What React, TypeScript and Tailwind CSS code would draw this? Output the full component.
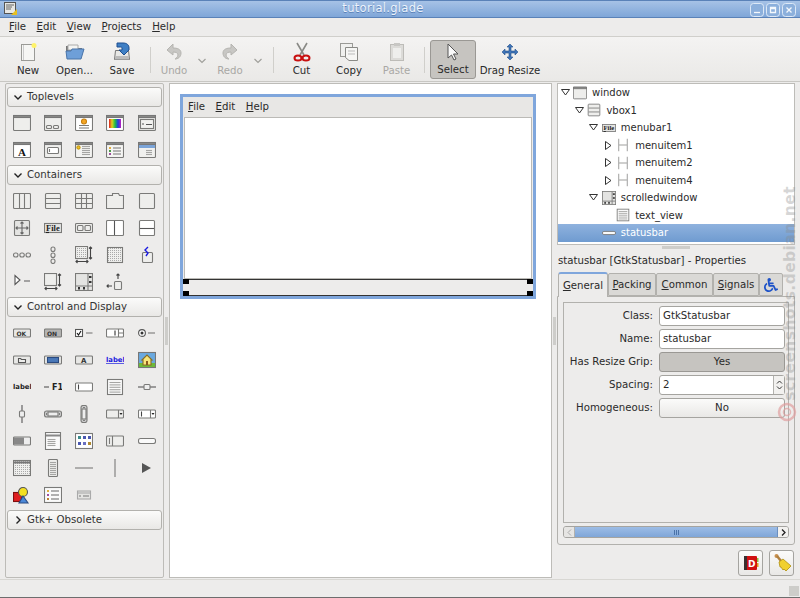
import type { ReactNode } from 'react';
import { FaWheelchair } from 'react-icons/fa';

// Small glyph canvas shared by palette and tree icons
function Ico({ children, size = 18 }: { children: ReactNode; size?: number }) {
  return (
    <svg width={size} height={size} viewBox="0 0 18 18" fill="none" stroke="#7a7a78" strokeWidth="1.1">
      {children}
    </svg>
  );
}

const Win = ({ children, fill = '#eeeeec' }: { children?: ReactNode; fill?: string }) => (
  <>
    <rect x="0.5" y="1.5" width="17" height="15" rx="1" fill={fill} />
    <rect x="0.5" y="1.5" width="17" height="2" fill="#8a8a88" stroke="#777" />
    {children}
  </>
);
const Lines = ({ x, y, w, n, gap = 2 }: { x: number; y: number; w: number; n: number; gap?: number }) => (
  <>
    {Array.from({ length: n }).map((_, i) => (
      <path key={i} d={`M${x} ${y + i * gap + 0.5}h${w}`} stroke="#a5a5a3" />
    ))}
  </>
);

const icons: Record<string, ReactNode> = {
  window: <Win />,
  dialog: <Win><rect x="2.5" y="11.5" width="5" height="3" rx="1" /><rect x="9.5" y="11.5" width="5" height="3" rx="1" /></Win>,
  about: <Win fill="#fff"><circle cx="9" cy="7.5" r="2.5" fill="#f5a623" stroke="#c67f10" /><path d="M4 11.5h10M4 14h10" /></Win>,
  color: <Win fill="#fff"><rect x="3" y="5" width="12" height="9" fill="url(#rainbow)" stroke="none" /></Win>,
  filedlg: <Win fill="#e4e4e2"><rect x="2.5" y="5.5" width="13" height="9" fill="#f2f2f0" /><path d="M4 10h2M8 10.5h6" stroke="#555" /></Win>,
  font: <Win fill="#fff"><text x="5" y="14.5" fontFamily="Liberation Serif, serif" fontSize="11" fontWeight="700" fill="#111" stroke="none">A</text></Win>,
  input: <Win><rect x="3.5" y="6.5" width="11" height="6" rx="1" fill="#fff" /><path d="M5.5 8v3" /></Win>,
  message: <Win fill="#f3f3f1"><circle cx="3.5" cy="6.5" r="1.6" fill="#f5c623" stroke="#c69a10" /><Lines x={7} y={5} w={8} n={5} /></Win>,
  recent: <Win fill="#f5f5f3"><rect x="3" y="6" width="2" height="2" fill="#e0b040" stroke="none" /><rect x="3" y="9" width="2" height="2" fill="#4a9a4a" stroke="none" /><rect x="3" y="12" width="2" height="2" fill="#a050a0" stroke="none" /><path d="M7 7h8M7 10h8M7 13h8" stroke="#777" /></Win>,
  assistant: <Win fill="#f0f0ee"><rect x="1" y="4" width="16" height="3" fill="#7ba4d8" stroke="none" /><Lines x={8} y={9} w={6} n={3} /></Win>,
  hbox: <><rect x="0.5" y="1.5" width="17" height="15" rx="1" fill="#eeeeec" /><path d="M6.5 2v14M11.5 2v14" /></>,
  vbox: <><rect x="1.5" y="1.5" width="15" height="15" rx="1" fill="#eeeeec" /><path d="M2 6.5h14M2 11.5h14" /></>,
  table: <><rect x="0.5" y="1.5" width="17" height="15" rx="1" fill="#eeeeec" /><path d="M6.5 2v14M11.5 2v14M1 6.5h16M1 11.5h16" /></>,
  notebook: <><path d="M0.5 16.5v-13h6v-2h6l1 2h4v13z" fill="#eeeeec" /></>,
  frame: <rect x="1.5" y="1.5" width="15" height="15" rx="1" fill="#eeeeec" />,
  fixed: <><rect x="1.5" y="1.5" width="15" height="15" rx="1" fill="#e4e4e2" /><path d="M9 3v12M3 9h12M7.5 4.5 9 3l1.500 1.500M7.500 13.500 9 15l1.500-1.500M4.500 7.500 3 9l1.500 1.500M13.500 7.500 15 9l-1.500 1.500" stroke="#666" /></>,
  menubar: <><rect x="0.5" y="4.5" width="17" height="9" fill="#e4e4e2" /><text x="2" y="12" fontFamily="Liberation Serif, serif" fontSize="8.5" fontWeight="700" fill="#222" stroke="none">File</text><path d="M2 13.5h3" stroke="#222" /></>,
  btnbox: <><rect x="0.5" y="4.5" width="17" height="9" rx="1" fill="#eeeeec" /><rect x="2.5" y="6.5" width="5.5" height="5" rx="1" /><rect x="10" y="6.5" width="5.5" height="5" rx="1" /></>,
  hpaned: <><rect x="0.5" y="1.5" width="17" height="15" rx="1" fill="#fff" /><path d="M8.500 2v14" stroke="#555" /></>,
  vpaned: <><rect x="1.5" y="1.5" width="15" height="15" rx="1" fill="#fff" /><path d="M2 9.500h14" stroke="#555" /></>,
  hsep3: <><rect x="0.5" y="7" width="4.500" height="4" rx="2" /><rect x="6.800" y="7" width="4.500" height="4" rx="2" /><rect x="13" y="7" width="4.500" height="4" rx="2" /></>,
  vsep3: <><rect x="7" y="1" width="4" height="4.500" rx="2" /><rect x="7" y="7" width="4" height="4.500" rx="2" /><rect x="7" y="13" width="4" height="4.500" rx="2" /></>,
  layout: <><rect x="0.5" y="0.5" width="12" height="12" fill="url(#dots)" /><path d="M15.500 1v12M14 2.500 15.500 1 17 2.500M14 11.500l1.500 1.500 1.500-1.500M1 15.500h12M2.500 14 1 15.500 2.500 17M11.500 14l1.500 1.500-1.500 1.500" stroke="#444" /></>,
  dotgrid: <rect x="1.5" y="1.5" width="15" height="15" fill="url(#dots)" />,
  hand: <><rect x="4.500" y="6.500" width="10" height="10" rx="1" fill="#eeeeec" /><path d="M10 1 7 4l3 3-2 3" stroke="#1a1ae0" strokeWidth="1.400" /></>,
  expander: <><path d="M2 2.500v9l5-4.500z" fill="#fff" stroke="#555" /><path d="M11 8h6" stroke="#666" /></>,
  viewport: <><rect x="0.5" y="0.5" width="12" height="12" fill="#eeeeec" /><path d="M15.500 1v12M14 2.500 15.500 1 17 2.500M14 11.500l1.500 1.500 1.500-1.500M1 15.500h12M2.500 14 1 15.500 2.500 17M11.500 14l1.500 1.500-1.500 1.500" stroke="#444" /></>,
  scrolled: <><rect x="0.5" y="0.5" width="17" height="17" fill="#e4e4e2" /><path d="M13 1v16M1 13h16" /><rect x="14" y="3" width="2.500" height="2" fill="#333" stroke="none" /><rect x="14" y="8" width="2.500" height="2" fill="#333" stroke="none" /><rect x="3" y="14" width="2" height="2.500" fill="#333" stroke="none" /><rect x="8" y="14" width="2" height="2.500" fill="#333" stroke="none" /></>,
  align: <><rect x="8.500" y="8.500" width="7" height="8" rx="1" fill="#eeeeec" /><path d="M12 6V1M10.500 2.500 12 1l1.500 1.500M6 13H1M2.500 11.500 1 13l1.500 1.500" stroke="#444" /></>,
  ok: <><rect x="0.5" y="5" width="17" height="8" rx="1" fill="#e8e8e6" /><text x="3.500" y="11.500" fontSize="6" fontWeight="700" fill="#333" stroke="none" fontFamily="DejaVu Sans">OK</text></>,
  on: <><rect x="0.5" y="5" width="17" height="8" rx="1" fill="#b5b5b3" /><text x="3" y="11.500" fontSize="6" fontWeight="700" fill="#333" stroke="none" fontFamily="DejaVu Sans">ON</text></>,
  check: <><rect x="0.5" y="5.500" width="7" height="7" fill="#fff" stroke="#555" /><path d="m2 9 1.500 2L6 7" stroke="#111" /><path d="M11 9h6.500" /></>,
  spin: <><rect x="0.5" y="5" width="17" height="8" rx="1" fill="#fff" /><path d="M9 6.500v5" stroke="#333" /><path d="M12.500 5v8M13 9h4" /></>,
  radio: <><circle cx="4" cy="9" r="3.400" fill="#fff" stroke="#555" /><circle cx="4" cy="9" r="1.500" fill="#333" stroke="none" /><path d="M10 9h7" /></>,
  filebtn: <><rect x="0.5" y="5" width="17" height="8" rx="1" fill="#e8e8e6" /><path d="M5.500 7.500h2l1 1h4v3h-7z" fill="#eeeeec" stroke="#555" /></>,
  colorbtn: <><rect x="0.5" y="5" width="17" height="8" rx="1" fill="#e8e8e6" /><rect x="3.500" y="6.500" width="11" height="5" fill="#4a78b8" stroke="#2a4a80" /></>,
  fontbtn: <><rect x="0.5" y="5" width="17" height="8" rx="1" fill="#e8e8e6" /><text x="6" y="12" fontSize="7" fontWeight="700" fill="#333" stroke="none" fontFamily="DejaVu Sans">A</text></>,
  link: <text x="0" y="11" fontSize="6.800" fontWeight="700" fill="#1a1ae0" stroke="none" textDecoration="underline" fontFamily="DejaVu Sans">label</text>,
  image: <><rect x="0.5" y="1.500" width="17" height="15" fill="#6aa9e0" stroke="#777" /><rect x="1" y="12" width="16" height="4" fill="#6dba3a" stroke="none" /><path d="M4 9 9 4l5 5h-1v5H5V9z" fill="#f7e57a" stroke="#8a6d20" /><rect x="8" y="10" width="2" height="4" fill="#8a5a20" stroke="none" /></>,
  label: <text x="0" y="11" fontSize="6.800" fontWeight="700" fill="#222" stroke="none" fontFamily="DejaVu Sans">label</text>,
  accel: <><path d="M0 9h5" stroke="#555" /><text x="8" y="12" fontSize="8" fontWeight="700" fill="#222" stroke="none" fontFamily="DejaVu Sans">F1</text></>,
  entry: <><rect x="0.5" y="5" width="17" height="8" rx="1" fill="#fff" /><path d="M3.500 6.500v5" stroke="#444" /></>,
  textview: <><rect x="1.500" y="1.500" width="15" height="15" fill="#fafafa" /><Lines x={3.5} y={4} w={11} n={5} gap={2.4} /></>,
  hscale: <><path d="M0 9h18" stroke="#777" strokeWidth="1.400" /><rect x="6" y="6.500" width="6" height="5" rx="1" fill="#eee" /></>,
  vscale: <><path d="M9 0v18" stroke="#777" strokeWidth="1.400" /><rect x="6.500" y="6" width="5" height="6" rx="1" fill="#eee" /></>,
  hscroll: <><rect x="0.5" y="6" width="17" height="6" rx="2" fill="#ccc" /><rect x="4" y="7" width="10" height="4" fill="#eee" /><path d="m2 9 1-1v2zm14 0-1-1v2z" fill="#333" stroke="none" /></>,
  vscroll: <><rect x="6" y="0.5" width="6" height="17" rx="2" fill="#ccc" /><rect x="7" y="4" width="4" height="10" fill="#eee" /><path d="m9 2-1 1h2zm0 14-1-1h2z" fill="#333" stroke="none" /></>,
  combo: <><rect x="0.5" y="5" width="17" height="8" rx="1" fill="#eeeeec" /><path d="M12.500 5v8" /><path d="m13.500 8 1.500 2 1.500-2z" fill="#222" stroke="none" /></>,
  comboentry: <><rect x="0.5" y="5" width="17" height="8" rx="1" fill="#fff" /><path d="M3.500 6.500v5" stroke="#444" /><path d="M12.500 5v8" /><path d="m13.500 8 1.500 2 1.500-2z" fill="#222" stroke="none" /></>,
  progress: <><rect x="0.5" y="5" width="17" height="8" rx="1" fill="#eee" /><rect x="1" y="5.500" width="10" height="7" fill="#888" stroke="none" /></>,
  tree: <><rect x="1.500" y="0.5" width="15" height="17" fill="#fafafa" /><path d="M2 3.500h14" stroke="#888" strokeWidth="2" /><Lines x={3.5} y={7} w={8} n={4} /></>,
  iconview: <><rect x="0.5" y="1.500" width="17" height="15" fill="#fff" /><rect x="3" y="4" width="3" height="3" fill="#3a8a8a" stroke="none" /><rect x="8" y="4" width="3" height="3" fill="#4a58b0" stroke="none" /><rect x="13" y="4" width="3" height="3" fill="#4a58b0" stroke="none" /><rect x="3" y="10" width="3" height="3" fill="#4a58b0" stroke="none" /><rect x="8" y="10" width="3" height="3" fill="#6a70c0" stroke="none" /><rect x="13" y="10" width="3" height="3" fill="#b08a30" stroke="none" /></>,
  cellview: <><rect x="0.5" y="4" width="17" height="10" rx="1" fill="#eeeeec" /><path d="M3.500 6v6M6.500 4v10" /></>,
  hstatus: <rect x="0.5" y="6.500" width="17" height="5" rx="2" fill="#fafafa" />,
  calendar: <><rect x="0.5" y="1.500" width="17" height="15" fill="url(#dots)" /><path d="M1 3.500h16" stroke="#777" strokeWidth="2" /></>,
  ruler: <><rect x="4.500" y="0.5" width="9" height="17" rx="1" fill="#eeeeec" /><Lines x={6} y={3} w={6} n={7} /></>,
  hline: <path d="M0 9h18" />,
  vline: <path d="M9 0v18" />,
  play: <path d="M4 4v10l9-5z" fill="#555" stroke="none" />,
  custom: <><rect x="0.5" y="6.500" width="8" height="9" fill="#e02020" stroke="#801010" /><circle cx="10" cy="6" r="4.500" fill="#f4e020" stroke="#555" /><path d="m10 10-4 7h9z" fill="#4a88d8" stroke="#2a4a80" /></>,
  list: <><rect x="0.5" y="1.500" width="17" height="15" fill="#fafafa" /><path d="M7 5h8M7 9h8M7 13h8" stroke="#666" /><rect x="3" y="4" width="2" height="2" fill="#e0b040" stroke="none" /><rect x="3" y="8" width="2" height="2" fill="#a050a0" stroke="none" /><rect x="3" y="12" width="2" height="2" fill="#c08030" stroke="none" /></>,
  small: <><rect x="2.500" y="5" width="13" height="8" fill="#e4e4e2" stroke="#aaa" /><path d="M2.500 7h13" stroke="#aaa" /><path d="M4 10h2M8 10h6" stroke="#777" /></>,
  menuitem: <path d="M3.500 1v16M14.500 1v16M4 9h10" stroke="#8f8f8d" />,
  statusbar: <rect x="0.5" y="7" width="17" height="4" rx="2" fill="#fafafa" stroke="#777" />,
};

const palettes: { title: string; open: boolean; items: string[] }[] = [
  { title: 'Toplevels', open: true, items: ['window', 'dialog', 'about', 'color', 'filedlg', 'font', 'input', 'message', 'recent', 'assistant'] },
  { title: 'Containers', open: true, items: ['hbox', 'vbox', 'table', 'notebook', 'frame', 'fixed', 'menubar', 'btnbox', 'hpaned', 'vpaned', 'hsep3', 'vsep3', 'layout', 'dotgrid', 'hand', 'expander', 'viewport', 'scrolled', 'align'] },
  { title: 'Control and Display', open: true, items: ['ok', 'on', 'check', 'spin', 'radio', 'filebtn', 'colorbtn', 'fontbtn', 'link', 'image', 'label', 'accel', 'entry', 'textview', 'hscale', 'vscale', 'hscroll', 'vscroll', 'combo', 'comboentry', 'progress', 'tree', 'iconview', 'cellview', 'hstatus', 'calendar', 'ruler', 'hline', 'vline', 'play', 'custom', 'list', 'small'] },
  { title: 'Gtk+ Obsolete', open: false, items: [] },
];

function ToolBtn({ label, icon, w, off, active }: { label: string; icon: ReactNode; w: string; off?: boolean; active?: boolean }) {
  return (
    <div className={`${w} h-[39px] flex flex-col items-center justify-between pb-[2px] ${off ? 'text-[#a9a8a5]' : ''} ${active ? 'bg-[#c6c4c0] border border-[#9a9894] rounded-[3px]' : ''}`}>
      <div className="h-[24px] flex items-center justify-center">{icon}</div>
      <span className="leading-[13px] whitespace-nowrap">{label}</span>
    </div>
  );
}

const ToolSep = () => <div className="w-px h-[26px] bg-[#d0cfcb] mx-[4px] mt-[7px]" />;
const DropArrow = () => (
  <svg width="10" height="8" viewBox="0 0 10 8" className="mt-[17px] ml-[4px]" fill="none" stroke="#a0a09c" strokeWidth="1.2"><path d="m1.500 2 3.500 3.500L8.500 2" /></svg>
);

const HANDLE_DOTS = 'bg-[radial-gradient(#a9a8a4_0.6px,transparent_0.8px)] bg-[length:2px_2px]';

function Field({ label, children }: { label: string; children: ReactNode }) {
  return (
    <div className="flex items-center h-[23px]">
      <div className="w-[95px] text-right pr-[6px] whitespace-nowrap">{label}</div>
      {children}
    </div>
  );
}

function TreeRow({ depth, open, icon, label, selected }: { depth: number; open?: boolean; icon: string; label: string; selected?: boolean }) {
  return (
    <div className={`h-[17.5px] flex items-center pl-[1px] text-[10px] ${selected ? 'bg-gradient-to-b from-[#8fb2de] to-[#6f9bd0] text-white' : ''}`}>
      <div style={{ width: depth * 14.4 }} />
      <div className="w-[12px] flex justify-center">
        {open === true && <svg width="9" height="7" viewBox="0 0 9 7"><path d="M.5.5h8L4.500 6z" fill="#fff" stroke="#333" /></svg>}
        {open === false && <svg width="7" height="9" viewBox="0 0 7 9"><path d="M.5.5v8L6 4.500z" fill="#fff" stroke="#333" /></svg>}
      </div>
      <div className="w-[16px] ml-[1px] flex justify-center"><Ico size={14}>{icons[icon]}</Ico></div>
      <span className="ml-[4px]">{label}</span>
    </div>
  );
}

export default function App() {
  return (
    <div className='relative w-[800px] h-[598px] overflow-hidden flex flex-col bg-[#edeceb] text-[10.2px] text-[#2a2a2a] font-["DejaVu_Sans",sans-serif] border-b border-[#6d6d6d]'>
      <svg width="0" height="0" className="absolute">
        <defs>
          <linearGradient id="rainbow" x1="0" x2="1" y1="0" y2="0">
            <stop offset="0" stopColor="#e02020" /><stop offset=".25" stopColor="#e0d020" /><stop offset=".5" stopColor="#20c040" /><stop offset=".75" stopColor="#2040e0" /><stop offset="1" stopColor="#c020c0" />
          </linearGradient>
          <pattern id="dots" width="2" height="2" patternUnits="userSpaceOnUse">
            <rect width="2" height="2" fill="#f0f0ee" /><rect width="1" height="1" fill="#aaa" />
          </pattern>
        </defs>
      </svg>

      {/* Title bar */}
      <div className="h-[18px] shrink-0 relative flex items-center justify-center pr-[34px] border-t border-b border-[#5a82b8] bg-gradient-to-b from-[#a6c2e6] to-[#7fa6d8]">
        <svg width="14" height="14" viewBox="0 0 14 14" className="absolute left-[4px] top-[1px]">
          <rect x=".5" y=".5" width="11" height="11" fill="#e8e8e4" stroke="#555" />
          <path d="M2 3h8M2 5h6M2 7h5" stroke="#666" />
          <path d="M7 13l6-6v6z" fill="#e8c020" />
        </svg>
        <span className="text-[#eef4fb] text-[11.500px] tracking-[0.3px] [text-shadow:0_1px_0_#5a82b8]">tutorial.glade</span>
        <div className="absolute right-[4px] top-[2px] flex gap-[2px]">
          {['M4 9.500h6', 'M4.500 4.500h5v5h-5zM4.500 5.500h5', 'M4.500 4.500l5 5M9.500 4.500l-5 5'].map((d) => (
            <svg key={d} width="14" height="14" viewBox="0 0 14 14" fill="none">
              <rect x=".5" y=".5" width="13" height="13" rx="3" stroke="#dce8f6" fill="#8cb0dc" />
              <path d={d} stroke="#f4f8fc" strokeWidth="1.300" />
            </svg>
          ))}
        </div>
      </div>

      {/* Menu bar */}
      <div className="h-[19px] shrink-0 flex items-center pl-[9px] gap-[10.500px] border-b border-[#d0cfcb]">
        <span><u>F</u>ile</span>
        <span><u>E</u>dit</span>
        <span><u>V</u>iew</span>
        <span><u>P</u>rojects</span>
        <span><u>H</u>elp</span>
      </div>

      {/* Toolbar */}
      <div className="h-[45px] shrink-0 flex items-start pt-[3px] pl-[5px] border-b border-[#c8c7c3] bg-gradient-to-b from-[#f4f3f2] to-[#eae9e7]">
        <ToolBtn w="w-[46px]" label="New" icon={
          <svg width="18" height="20" viewBox="0 0 18 20"><rect x="2.500" y="2.500" width="13" height="16" fill="#f6f6f4" stroke="#9a9a96" /><path d="M4.500 3v15" stroke="#ccc" /><circle cx="15" cy="3.500" r="2.500" fill="#fff36a" /></svg>
        } />
        <ToolBtn w="w-[47px]" label="Open..." icon={
          <svg width="20" height="18" viewBox="0 0 20 18"><path d="M1 3h6l2 2h8v4H1z" fill="#777" /><path d="M3 2h10v5H3z" fill="#f4f4f2" stroke="#aaa" /><path d="M1 8h5l1-2h12l-3 10H2z" fill="#6e9fd8" stroke="#4a74a8" /></svg>
        } />
        <ToolBtn w="w-[48px]" label="Save" icon={
          <svg width="20" height="20" viewBox="0 0 20 20"><path d="M3.500 8.500h13l1 9h-15z" fill="#e8e8e6" stroke="#777" /><rect x="3" y="14" width="14" height="3.500" fill="#bbb" /><path d="M5 1h6c4 0 6 2 6 5v2l-5 5-5-5h3V6c0-1-1-1-2-1H5z" fill="#3f7fc4" stroke="#1f4f90" /></svg>
        } />
        <ToolSep />
        <ToolBtn w="w-[38px]" off label="Undo" icon={
          <svg width="18" height="18" viewBox="0 0 18 18"><path d="M8 1 2 7l6 5V9c3 0 5 1 5 3s-3 4-3 4c3 0 6-2 6-6S12 5 8 5z" fill="#c8c7c4" stroke="#b5b4b0" /></svg>
        } />
        <DropArrow />
        <div className="w-[4px]" />
        <ToolBtn w="w-[38px]" off label="Redo" icon={
          <svg width="18" height="18" viewBox="0 0 18 18"><path d="M10 1l6 6-6 5V9c-3 0-5 1-5 3s3 4 3 4c-3 0-6-2-6-6s4-5 8-5z" fill="#c8c7c4" stroke="#b5b4b0" /></svg>
        } />
        <DropArrow />
        <div className="w-[6px]" />
        <ToolSep />
        <ToolBtn w="w-[47px]" label="Cut" icon={
          <svg width="18" height="20" viewBox="0 0 18 20" fill="none"><path d="M4 1l7 12M14 1 7 13" stroke="#8a8a86" strokeWidth="1.600" /><ellipse cx="5" cy="16" rx="3.500" ry="2.600" stroke="#c81010" strokeWidth="2" /><ellipse cx="13" cy="16" rx="3.500" ry="2.600" stroke="#c81010" strokeWidth="2" /></svg>
        } />
        <ToolBtn w="w-[48px]" label="Copy" icon={
          <svg width="20" height="20" viewBox="0 0 20 20"><rect x="1.500" y="1.500" width="12" height="13" fill="#f0f0ee" stroke="#9a9a96" /><path d="M6.500 5.500h12v13H10l-3.500-3z" fill="#f6f6f4" stroke="#8a8a86" /><path d="M9 9h7M9 12h7" stroke="#bbb" /></svg>
        } />
        <ToolBtn w="w-[47px]" off label="Paste" icon={
          <svg width="18" height="20" viewBox="0 0 18 20"><rect x="2.500" y="2.500" width="13" height="16" fill="#dcdbd8" stroke="#bdbcb8" /><rect x="6" y="1" width="6" height="3" fill="#c8c7c4" /><rect x="5" y="6" width="8" height="10" fill="#eeeeec" /></svg>
        } />
        <ToolSep />
        <div className="w-[1px]" />
        <ToolBtn w="w-[46px]" active label="Select" icon={
          <svg width="16" height="20" viewBox="0 0 16 20"><path d="M3 2v14l3.500-3 2.500 5 2-1-2.500-5H13z" fill="#fafafa" stroke="#555" /></svg>
        } />
        <div className="w-[4px]" />
        <ToolBtn w="w-[60px]" label="Drag Resize" icon={
          <svg width="18" height="18" viewBox="0 0 18 18"><path d="M9 1l3 3h-2v4h4V6l3 3-3 3v-2h-4v4h2l-3 3-3-3h2v-4H4v2L1 9l3-3v2h4V4H6z" fill="#3f74b8" stroke="#24508c" strokeWidth=".6" /></svg>
        } />
      </div>

      {/* Panes */}
      <div className="flex-1 min-h-0 flex px-[5px] pt-[1px]">
        {/* Palette */}
        <div className="w-[159px] h-[495px] border border-[#bdbcb8] rounded-[2px] px-[1px] pt-[3px] flex flex-col">
          {palettes.map((p) => (
            <div key={p.title}>
              <div className="h-[20px] border border-[#b2b1ad] rounded-[3px] bg-gradient-to-b from-[#fbfbfa] to-[#e9e8e6] flex items-center pl-[5px] gap-[4px] mb-[2px] text-[#333]">
                <svg width="10" height="10" viewBox="0 0 10 10" fill="none" stroke="#222" strokeWidth="1.400">
                  <path d={p.open ? 'M1.500 3.500 5 7l3.500-3.500' : 'M3.500 1.500 7 5 3.500 8.500'} />
                </svg>
                <span>{p.title}</span>
              </div>
              {p.open && (
                <div className="grid grid-cols-[repeat(5,31.25px)] auto-rows-[27px] pb-[2px] -ml-[1px]">
                  {p.items.map((name) => (
                    <div key={name} className="flex items-center justify-center">
                      <Ico>{icons[name]}</Ico>
                    </div>
                  ))}
                </div>
              )}
            </div>
          ))}
        </div>

        <div className="w-[5px] h-[495px] flex items-center justify-center">
          <div className={`w-[3px] h-[28px] ${HANDLE_DOTS}`} />
        </div>

        {/* Design area */}
        <div className="w-[383px] h-[495px] bg-white border border-[#bdbcb8] pl-[10px] pt-[10px]">
          <div className="relative w-[356px] h-[205px] border-[3px] border-[#7fa6dc] bg-[#edeceb] flex flex-col">
            <div className="h-[20px] shrink-0 flex items-center gap-[10.500px] pl-[5px] bg-[#e8e7e5]">
              <span><u>F</u>ile</span>
              <span><u>E</u>dit</span>
              <span><u>H</u>elp</span>
            </div>
            <div className="flex-1 bg-white border border-[#bbbab6] mx-[1px]" />
            <div className="h-[17px] shrink-0 bg-[#edeceb] border-y border-[#333] relative">
              <div className="absolute left-0 top-[-1px] w-[6px] h-[5px] bg-black" />
              <div className="absolute left-0 bottom-[-1px] w-[6px] h-[5px] bg-black" />
              <div className="absolute right-0 top-[-1px] w-[6px] h-[5px] bg-black" />
              <div className="absolute right-0 bottom-[-1px] w-[6px] h-[5px] bg-black" />
            </div>
          </div>
        </div>

        <div className="w-[5px] h-[495px] flex items-center justify-center">
          <div className={`w-[3px] h-[28px] ${HANDLE_DOTS}`} />
        </div>

        {/* Right column */}
        <div className="w-[238px] h-[495px] flex flex-col">
          <div className="h-[162px] shrink-0 bg-white border border-[#bdbcb8] overflow-hidden">
            <TreeRow depth={0} open icon="window" label="window" />
            <TreeRow depth={1} open icon="vbox" label="vbox1" />
            <TreeRow depth={2} open icon="menubar" label="menubar1" />
            <TreeRow depth={3} open={false} icon="menuitem" label="menuitem1" />
            <TreeRow depth={3} open={false} icon="menuitem" label="menuitem2" />
            <TreeRow depth={3} open={false} icon="menuitem" label="menuitem4" />
            <TreeRow depth={2} open icon="scrolled" label="scrolledwindow" />
            <TreeRow depth={3} icon="textview" label="text_view" />
            <TreeRow depth={2} icon="statusbar" label="statusbar" selected />
          </div>
          <div className="h-[5px] flex justify-center items-center">
            <div className={`w-[28px] h-[3px] ${HANDLE_DOTS}`} />
          </div>
          <div className="h-[14px] flex items-center pl-[1px] mt-[4px] whitespace-nowrap">statusbar [GtkStatusbar] - Properties</div>

          {/* Notebook tabs */}
          <div className="flex items-end h-[25px] mt-[4px] pl-[1px] relative z-10">
            <div className="w-[50px] h-[25px] bg-[#edeceb] border border-b-0 border-[#b2b1ad] border-t-[#7fa6dc] border-t-2 rounded-t-[3px] flex items-center justify-center"><span><u>G</u>eneral</span></div>
            <div className="w-[48px] h-[23px] mb-[1px] bg-[#dad9d6] border border-[#b2b1ad] rounded-t-[2px] flex items-center justify-center"><span><u>P</u>acking</span></div>
            <div className="w-[57px] h-[23px] mb-[1px] bg-[#dad9d6] border border-[#b2b1ad] rounded-t-[2px] flex items-center justify-center"><span><u>C</u>ommon</span></div>
            <div className="w-[46px] h-[23px] mb-[1px] bg-[#dad9d6] border border-[#b2b1ad] rounded-t-[2px] flex items-center justify-center"><span><u>S</u>ignals</span></div>
            <div className="w-[24px] h-[23px] mb-[1px] bg-[#dad9d6] border border-[#b2b1ad] rounded-t-[2px] flex items-center justify-center"><FaWheelchair className="text-[#1d52c8] text-[14px]" /></div>
          </div>
          <div className="h-[249px] -mt-px border border-[#b2b1ad] rounded-b-[3px] px-[5px] pt-[5px] flex flex-col">
            <div className="h-[221px] shrink-0 border border-[#b2b1ad] pt-[1px]">
              <Field label="Class:">
                <div className="w-[126px] h-[20px] bg-white border border-[#a5a4a0] rounded-[3px] flex items-center pl-[3px]">GtkStatusbar</div>
              </Field>
              <Field label="Name:">
                <div className="w-[126px] h-[20px] bg-white border border-[#a5a4a0] rounded-[3px] flex items-center pl-[3px]">statusbar</div>
              </Field>
              <Field label="Has Resize Grip:">
                <div className="w-[126px] h-[20px] bg-[#c6c4c0] border border-[#9a9894] rounded-[3px] flex items-center justify-center">Yes</div>
              </Field>
              <Field label="Spacing:">
                <div className="w-[126px] h-[20px] bg-white border border-[#a5a4a0] rounded-[3px] flex items-center pl-[3px] relative">
                  2
                  <div className="absolute right-0 top-0 h-full w-[11px] bg-[#f2f1ef] border-l border-[#b2b1ad] flex flex-col items-center justify-center gap-[2px]">
                    <svg width="7" height="4" viewBox="0 0 7 4" fill="none" stroke="#333"><path d="m1 3.500 2.500-2.500L6 3.500" /></svg>
                    <svg width="7" height="4" viewBox="0 0 7 4" fill="none" stroke="#333"><path d="m1 .5 2.500 2.500L6 .5" /></svg>
                  </div>
                </div>
              </Field>
              <Field label="Homogeneous:">
                <div className="w-[126px] h-[20px] bg-gradient-to-b from-[#fbfbfa] to-[#e9e8e6] border border-[#a5a4a0] rounded-[3px] flex items-center justify-center">No</div>
              </Field>
            </div>
            <div className="mt-[3px] h-[12px] shrink-0 flex border border-[#a5a4a0] rounded-[3px] overflow-hidden">
              <div className="w-[11px] bg-[#e6e5e3] border-r border-[#b2b1ad] flex items-center justify-center">
                <svg width="5" height="7" viewBox="0 0 5 7" fill="none" stroke="#aaa"><path d="M4 .5 1 3.500l3 3" /></svg>
              </div>
              <div className="flex-1 bg-gradient-to-b from-[#9dbde6] to-[#7fa6d8] flex items-center justify-center gap-[1px]">
                <div className="w-px h-[5px] bg-[#4a72a8]" /><div className="w-px h-[5px] bg-[#4a72a8]" /><div className="w-px h-[5px] bg-[#4a72a8]" />
              </div>
              <div className="w-[11px] bg-[#f2f1ef] border-l border-[#6a8fc0] flex items-center justify-center">
                <svg width="5" height="7" viewBox="0 0 5 7" fill="none" stroke="#222" strokeWidth="1.300"><path d="m1 .5 3 3-3 3" /></svg>
              </div>
            </div>
          </div>

          <div className="flex justify-end gap-[6px] mt-[5px] pr-[1px]">
            <div className="w-[25px] h-[26px] border border-[#a5a4a0] rounded-[3px] bg-gradient-to-b from-[#fbfbfa] to-[#e9e8e6] flex items-center justify-center">
              <svg width="16" height="16" viewBox="0 0 16 16"><rect x="1" y="1" width="13" height="14" rx="1" fill="#d01010" /><rect x="1" y="1" width="3" height="14" fill="#3a3030" /><path d="M14 3h1.500v4H14z" fill="#8ac040" /><path d="M14 8h1.500v4H14z" fill="#e0a020" /><text x="5" y="12" fontSize="9" fontWeight="700" fill="#fff" fontFamily="DejaVu Sans">D</text></svg>
            </div>
            <div className="w-[25px] h-[26px] border border-[#a5a4a0] rounded-[3px] bg-gradient-to-b from-[#fbfbfa] to-[#e9e8e6] flex items-center justify-center">
              <svg width="20" height="20" viewBox="0 0 20 20"><circle cx="4.500" cy="3" r="2" fill="#c89050" /><path d="M5 3l4 5" stroke="#b08040" strokeWidth="2.500" /><path d="M7 9l4-3 8 7-5 5-2-2-1 1-2-3-1 0z" fill="#f0d030" stroke="#b09010" strokeWidth=".8" /></svg>
            </div>
          </div>
        </div>
      </div>

      {/* Status bar */}
      <div className="h-[18px] shrink-0 border-t border-[#d8d7d3] relative">
        <div className={`absolute right-[1px] bottom-[1px] w-[10px] h-[10px] ${HANDLE_DOTS}`} />
      </div>

      {/* Site watermark */}
      <div className="absolute left-[781px] top-[186px] [writing-mode:vertical-rl] rotate-180 text-[15.500px] font-bold text-[#8a8a8a]/35 tracking-[0.4px] leading-[18px] whitespace-nowrap">screenshots.debian.net</div>
      <svg className="absolute left-[777px] top-[402px]" width="20" height="20" viewBox="0 0 20 20" fill="none">
        <circle cx="10" cy="10" r="8" stroke="#e0a0a0" strokeWidth="2.500" opacity=".7" />
        <circle cx="10" cy="10" r="3.500" stroke="#e0a0a0" strokeWidth="1.500" opacity=".7" />
      </svg>
    </div>
  );
}
